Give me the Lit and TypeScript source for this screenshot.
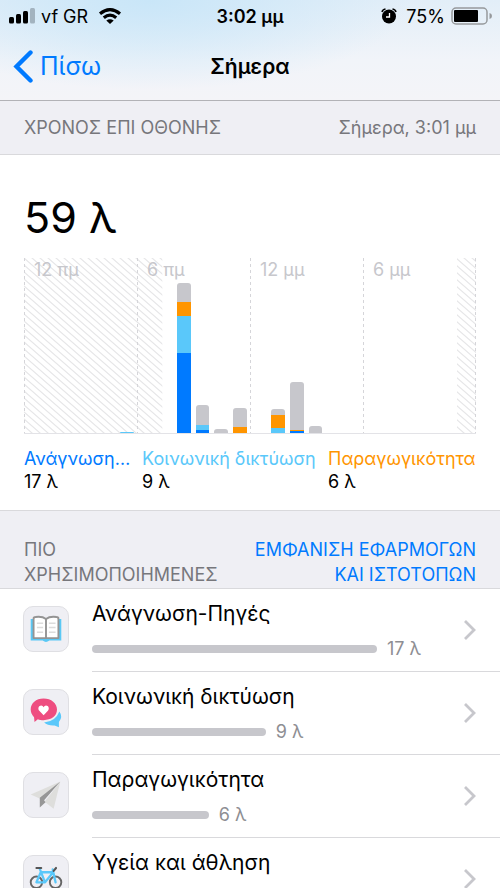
import { LitElement, html, css, svg } from "lit";
import { customElement } from "lit/decorators.js";

type Kind = "blue" | "cyan" | "orange" | "gray";
interface Column { hour: number; parts: [Kind, number][]; }

const COLUMNS: Column[] = [
  { hour: 5, parts: [["cyan", 1]] },
  { hour: 8, parts: [["gray", 19], ["orange", 14], ["cyan", 37], ["blue", 80]] },
  { hour: 9, parts: [["gray", 20], ["cyan", 5], ["blue", 3]] },
  { hour: 10, parts: [["gray", 4]] },
  { hour: 11, parts: [["gray", 19], ["orange", 6]] },
  { hour: 13, parts: [["gray", 6], ["orange", 13], ["cyan", 5]] },
  { hour: 14, parts: [["gray", 48], ["orange", 1], ["blue", 2]] },
  { hour: 15, parts: [["gray", 7]] },
];

const TIMES = ["12 πμ", "6 πμ", "12 μμ", "6 μμ"];

const LEGEND: { label: string; value: string; kind: Kind }[] = [
  { label: "Ανάγνωση…", value: "17 λ", kind: "blue" },
  { label: "Κοινωνική δικτύωση", value: "9 λ", kind: "cyan" },
  { label: "Παραγωγικότητα", value: "6 λ", kind: "orange" },
];

const book = svg`
  <path d="M7 12.500H39V35H26.500Q23 38 19.500 35H7Z" fill="#5ac8f5"/>
  <path d="M10 12.500Q10 10.500 12 10.500Q19 9.500 23 12.500Q27 9.500 34 10.500Q36 10.500 36 12.500V32.500H10Z" fill="#fff" stroke="#949494" stroke-width="2" stroke-linejoin="round"/>
  <path d="M23 12.500V32.500" stroke="#949494" stroke-width="2"/>
  <path d="M13.500 17H20M13.500 21.500H20M13.500 26.500H20M26 17H33M26 21.500H33M26 26.500H33" stroke="#dcdcdc" stroke-width="1.600"/>`;

const chat = svg`
  <path d="M37 22.500Q41 28 36.500 33.500L36.500 39L32 37Q25 37.500 21 34Q33 33 37 22.500Z" fill="#5ac8fa"/>
  <path d="M20.500 9C28.500 9 34.500 14 34.500 20.500C34.500 27.500 28.500 31.500 20.500 31.500C18 31.500 16 31.200 14.500 30.500L11 33.500L10.500 28.500C8.500 26.500 7 24 7 20.500C7 14 12.500 9 20.500 9Z" fill="#ee4d80"/>
  <path d="M20.500 26.500L16 21.800C14 19.500 15.500 16.300 18 16.300Q19.700 16.300 20.500 18Q21.300 16.300 23 16.300C25.600 16.300 27 19.500 25 21.800Z" fill="#fff"/>`;

const plane = svg`
  <path d="M38 9L7 22.500L17 27Z" fill="#dededc"/>
  <path d="M38 9L21.500 30L31 37.500Z" fill="#dededc"/>
  <path d="M38 9L16.500 26V36L22.500 30.500L21 28.500Z" fill="#979797"/>`;

const bike = svg`
  <g fill="none" stroke-linecap="round" stroke-linejoin="round">
    <circle cx="13" cy="27.500" r="6" stroke="#666" stroke-width="2"/>
    <circle cx="33" cy="27.500" r="6" stroke="#666" stroke-width="2"/>
    <path d="M13 27.500L17.500 17H30.500L22 27.500H13M22 27.500L16.500 13.500M30 14L33 27.500" stroke="#5ac8fa" stroke-width="2.400"/>
    <path d="M13 12.500H18M31 15.500L33.500 12.500" stroke="#555" stroke-width="2.200"/>
  </g>`;

const ROWS = [
  { title: "Ανάγνωση-Πηγές", value: "17 λ", share: 100, icon: book },
  { title: "Κοινωνική δικτύωση", value: "9 λ", share: 61, icon: chat },
  { title: "Παραγωγικότητα", value: "6 λ", share: 41, icon: plane },
  { title: "Υγεία και άθληση", value: "", share: 34, icon: bike },
];

@customElement("app-root")
export class AppRoot extends LitElement {
  static styles = css`
    :host { display: block; height: 100vh; overflow: hidden; background: #fff; color: #000;
      font-family: Inter, "Noto Sans", "Liberation Sans", sans-serif; }
    * { box-sizing: border-box; }
    a { text-decoration: none; color: #007aff; }
    button { border: 0; background: none; padding: 0; font: inherit; color: inherit; text-align: left; }
    svg { display: block; flex: none; }
    .top { border-bottom: 1px solid #b2b2b6;
      background: radial-gradient(ellipse 260px 90px at 30% 0, #c9e6f8, rgba(210, 233, 248, 0)), linear-gradient(#e2eef8, #f1f4f9 60%, #f4f4f8); }
    .status, .nav { display: grid; grid-template-columns: 1fr auto 1fr; align-items: center; }
    .status { height: 32px; padding: 0 8px; font-size: 18px; }
    .left, .right { display: flex; align-items: center; }
    .left { gap: 6px; }
    .right { justify-content: flex-end; gap: 6px; }
    .alarm { margin-right: 3px; }
    .clock { font-weight: 600; }
    .nav { height: 68px; padding: 0 13px; }
    .back { display: flex; align-items: center; gap: 7px; font-size: 25px; color: #007aff; }
    h1 { margin: 0; font-size: 21px; font-weight: 600; }
    .band { display: flex; justify-content: space-between; background: #efeff4; color: #77777c;
      padding: 14px 24px; font-size: 18px; line-height: 25px; border-bottom: 1px solid #d9d9dc; }
    .band h2 { margin: 0; font-size: 18px; font-weight: 400; }
    .most { border-top: 1px solid #d9d9dc; padding: 26px 24px 1px; }
    .most h2 { width: 210px; }
    .most a { width: 240px; text-align: right; }
    .usage { padding: 35px 24px 17px; }
    .total { font-size: 43px; line-height: 54px; margin: 0; }
    .chart { position: relative; height: 176px; margin-top: 14px; border-bottom: 1px solid #e3e3e7;
      display: grid; grid-template-columns: repeat(24, 1fr); }
    .off, .times { position: absolute; top: 0; left: 0; width: 100%; height: 100%; }
    .times { display: grid; grid-template-columns: repeat(4, 1fr); }
    .time { padding-left: 10px; font-size: 18px; line-height: 23px; color: #c7c7cc;
      background: repeating-linear-gradient(#d5d5d9 0 3px, transparent 3px 6px) 0 0 / 1px 100% no-repeat; }
    .time:last-child { background: repeating-linear-gradient(#d5d5d9 0 3px, transparent 3px 6px) 0 0 / 1px 100% no-repeat,
      repeating-linear-gradient(#d5d5d9 0 3px, transparent 3px 6px) 100% 0 / 1px 100% no-repeat; }
    .column { position: relative; grid-row: 1; align-self: end; margin: 0 3px 0 2px; border-radius: 3px 3px 0 0; overflow: hidden; }
    .blue { --tone: #007aff; }
    .cyan { --tone: #5ac8fa; }
    .orange { --tone: #ff9500; }
    .gray { --tone: #c7c7cc; }
    .part { background: var(--tone); }
    .legend { display: grid; grid-template-columns: 118fr 186fr 148fr; margin: 13px 0 0; }
    .entry { min-width: 0; font-size: 18px; line-height: 23px; }
    .entry dt { color: var(--tone); white-space: nowrap; }
    .entry dd { margin: 0; }
    ul { list-style: none; margin: 0; padding: 0; }
    .row { display: flex; width: 100%; padding-left: 23px; gap: 23px; }
    .tile { margin-top: 17px; border: 1px solid #dfdfe3; border-radius: 10px; background: #efeff4; }
    .body { flex: 1; display: flex; align-items: center; height: 83px; padding-right: 24px; border-bottom: 1px solid #d9d9dc; }
    .info { flex: 1; align-self: flex-start; padding-top: 11px; }
    .title { display: block; font-size: 21px; line-height: 28px; }
    .meter { display: flex; align-items: center; gap: 10px; height: 24px; margin-top: 9px; padding-right: 87px; font-size: 18px; line-height: 24px; color: #8e8e93; white-space: nowrap; }
    .bar { flex: none; height: 8px; border-radius: 4px; background: #c7c7cc; }
  `;

  render() {
    return html`
      <header class="top">
        <div class="status">
          <div class="left">
            <svg width="27" height="16" viewBox="0 0 27 16" aria-hidden="true">
              <rect x="1" y="9" width="5" height="6.500" rx="1.500"/><rect x="8" y="6" width="5" height="9.500" rx="1.500"/>
              <rect x="15" y="3" width="5" height="12.500" rx="1.500"/><rect x="22" y="0" width="5" height="15.500" rx="1.500" fill="#a3b3bf"/>
            </svg>
            <span>vf GR</span>
            <svg width="32" height="16" viewBox="-5 0 32 16" fill="none" stroke="#000" stroke-width="3.200" aria-hidden="true">
              <path d="M1 5.800Q11 -2.500 21 5.800M4.800 9.800Q11 4.500 17.200 9.800"/>
              <path d="M11 16L7.300 12.500Q11 9.800 14.700 12.500Z" fill="#000" stroke="none"/>
            </svg>
          </div>
          <span class="clock">3:02 μμ</span>
          <div class="right">
            <svg class="alarm" width="16" height="16" viewBox="0 0 16 16" aria-hidden="true">
              <circle cx="8" cy="8.500" r="7"/><path d="M1 4Q1.500 1.500 4.500 1M15 4Q14.500 1.500 11.500 1" fill="none" stroke="#000" stroke-width="1.500"/>
              <path d="M8.500 5V9H5" fill="none" stroke="#fff" stroke-width="1.300"/>
            </svg>
            <span>75%</span>
            <svg width="41" height="18" viewBox="0 0 41 18" aria-hidden="true">
              <rect x="1" y="1" width="35" height="16" rx="4" fill="none" stroke="#96999c" stroke-width="1.500"/>
              <rect x="3" y="3" width="24" height="12" rx="1"/><path d="M38.500 6Q41 6.500 41 9T38.500 12Z" fill="#96999c"/>
            </svg>
          </div>
        </div>
        <nav class="nav">
          <button class="back">
            <svg width="20" height="33" viewBox="0 0 20 33" fill="none" stroke="#007aff" stroke-width="4.400" stroke-linecap="round" aria-hidden="true"><path d="M17.500 2.500L3.500 16.500L17.500 30.500"/></svg>
            <span>Πίσω</span>
          </button>
          <h1>Σήμερα</h1>
        </nav>
      </header>
      <div class="band"><h2>ΧΡΟΝΟΣ ΕΠΙ ΟΘΟΝΗΣ</h2><span>Σήμερα, 3:01 μμ</span></div>
      <section class="usage">
        <p class="total">59 λ</p>
        <div class="chart">
          <svg class="off" aria-hidden="true">
            <defs>
              <pattern id="hatch" width="8" height="7" patternUnits="userSpaceOnUse">
                <path d="M-8 -7L16 14M-8 0L8 14M0 -7L16 7" stroke="#e6e6e8" stroke-width="1.200"/>
              </pattern>
            </defs>
            <rect width="30.600%" height="100%" fill="url(#hatch)"/>
            <rect x="95.800%" width="4.200%" height="100%" fill="url(#hatch)"/>
          </svg>
          <div class="times">${TIMES.map((t) => html`<span class="time">${t}</span>`)}</div>
          ${COLUMNS.map((c) => html`<div class="column" style="grid-column:${c.hour + 1}">
            ${c.parts.map(([kind, size]) => html`<div class="part ${kind}" style="height:${size}px"></div>`)}
          </div>`)}
        </div>
        <dl class="legend">
          ${LEGEND.map((l) => html`<div class="entry ${l.kind}"><dt>${l.label}</dt><dd>${l.value}</dd></div>`)}
        </dl>
      </section>
      <div class="band most"><h2>ΠΙΟ ΧΡΗΣΙΜΟΠΟΙΗΜΕΝΕΣ</h2><a href="#apps">ΕΜΦΑΝΙΣΗ ΕΦΑΡΜΟΓΩΝ ΚΑΙ ΙΣΤΟΤΟΠΩΝ</a></div>
      <ul>
        ${ROWS.map((r) => html`<li><button class="row">
          <svg class="tile" width="46" height="46" viewBox="0 0 46 46" aria-hidden="true">${r.icon}</svg>
          <span class="body">
            <span class="info">
              <span class="title">${r.title}</span>
              <span class="meter"><span class="bar" style="width:${r.share}%"></span><span>${r.value}</span></span>
            </span>
            <svg width="12" height="20" viewBox="0 0 12 20" fill="none" stroke="#c7c7cc" stroke-width="2.800" aria-hidden="true"><path d="M1 1L10 10L1 19"/></svg>
          </span>
        </button></li>`)}
      </ul>`;
  }
}
